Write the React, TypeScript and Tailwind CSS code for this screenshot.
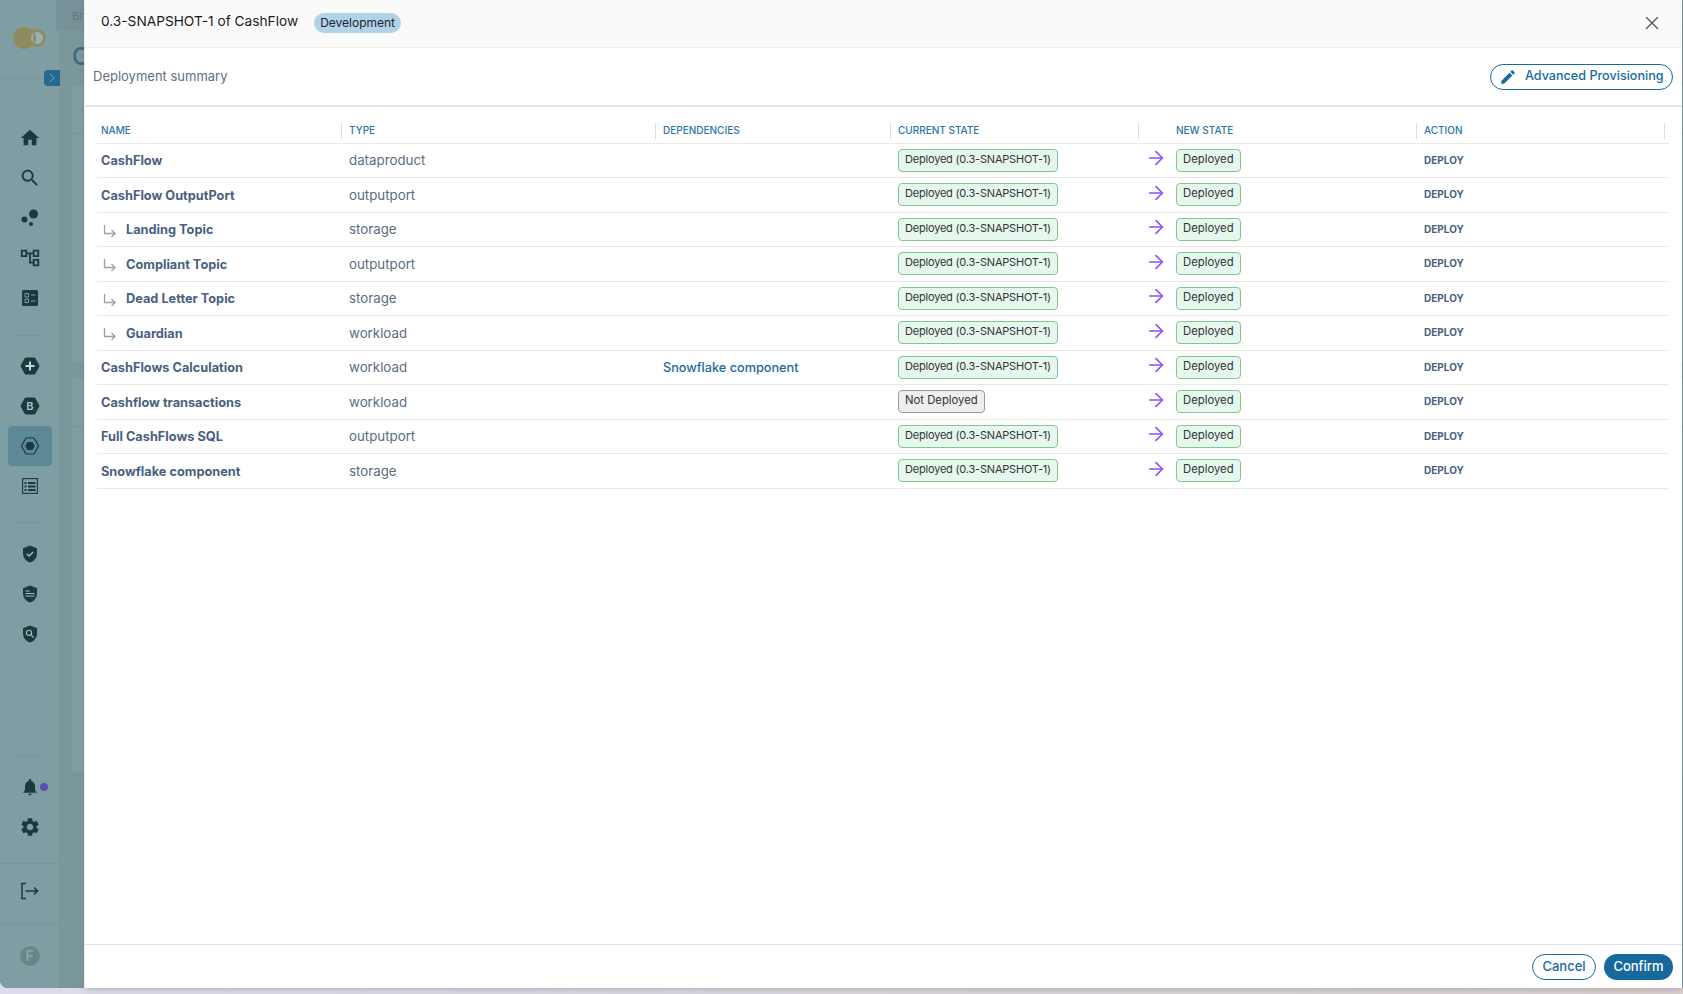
import React from 'react';
import { ArrowRight, X } from 'lucide-react';

const DARK = '#1b3a40';

const Hex = ({ children }: { children?: React.ReactNode }) => (
  <svg width="20" height="20" viewBox="0 0 20 20">
    <path d="M6 1.500h8q1 0 1.500.9l3.600 6.700q.5.9 0 1.800l-3.600 6.700q-.5.9-1.500.9H6q-1 0-1.500-.9L.9 10.900q-.5-.9 0-1.800l3.600-6.700Q5 1.500 6 1.500z" fill={DARK} />
    {children}
  </svg>
);

const Shield = ({ children }: { children?: React.ReactNode }) => (
  <svg width="18" height="18" viewBox="0 0 18 18">
    <path d="M9 .5l7 2.800v5.200c0 4.200-3 7.800-7 9-4-1.200-7-4.800-7-9V3.300z" fill={DARK} />
    {children}
  </svg>
);

const Mui = ({ d, size = 22 }: { d: string; size?: number }) => (
  <svg width={size} height={size} viewBox="0 0 24 24" fill={DARK}>
    <path d={d} />
  </svg>
);

const NavItem = ({ children, active }: { children: React.ReactNode; active?: boolean }) => (
  <div className={`ml-2 mr-[7px] flex h-10 items-center justify-center rounded ${active ? 'bg-[#5d8997]' : ''}`}>{children}</div>
);

const Sidebar = () => (
  <div className="flex h-full w-[60px] shrink-0 flex-col border-r border-[#76949a] bg-[#7f9ea3]">
    <div className="flex h-[79px] shrink-0 items-center justify-center border-b border-[#76949a] pb-[3px]">
      <svg width="34" height="24" viewBox="0 0 34 24">
        <circle cx="11" cy="12" r="11" fill="#8f8b5f" />
        <circle cx="24" cy="12" r="7.500" fill="#98b2b2" stroke="#8f8b5f" strokeWidth="3" />
        <ellipse cx="21.500" cy="12" rx="1.400" ry="5" fill="#8f8b5f" />
      </svg>
    </div>
    <div className="mt-[39px] shrink-0">
      <NavItem><Mui d="M10 20v-6h4v6h5v-8h3L12 3 2 12h3v8z" /></NavItem>
      <NavItem><Mui d="M15.500 14h-.79l-.28-.27C15.410 12.590 16 11.110 16 9.500 16 5.910 13.090 3 9.500 3S3 5.910 3 9.500 5.910 16 9.500 16c1.610 0 3.090-.59 4.230-1.570l.27.28v.79l5 4.990L20.490 19l-4.990-5zm-6 0C7.010 14 5 11.990 5 9.500S7.010 5 9.500 5 14 7.010 14 9.500 11.990 14 9.500 14z" /></NavItem>
      <NavItem>
        <svg width="20" height="20" viewBox="0 0 20 20" fill={DARK}>
          <circle cx="4.500" cy="11.500" r="3" /><circle cx="11" cy="16" r="2" /><circle cx="13.500" cy="6" r="4.500" />
        </svg>
      </NavItem>
      <NavItem><Mui d="M22 11V3h-7v3H9V3H2v8h7V8h2v10h4v3h7v-8h-7v3h-2V8h2v3h7zM7 9H4V5h3v4zm10 6h3v4h-3v-4zm0-10h3v4h-3V5z" /></NavItem>
      <NavItem>
        <svg width="16" height="16" viewBox="0 0 16 16">
          <rect width="16" height="16" rx="1.500" fill={DARK} />
          <path d="M3 3.500h3.500V7H3zM3 9h3.500v3.500H3z" fill="none" stroke="#7f9ea3" strokeWidth="1" />
          <path d="M9 5h4.500M9 11h4.500" stroke="#7f9ea3" strokeWidth="1.200" />
        </svg>
      </NavItem>
    </div>
    <div className="mx-4 mt-[17px] h-px shrink-0 bg-[#76949a]" />
    <div className="mt-[10px] shrink-0">
      <NavItem>
        <Hex><path d="M10 5.500v9M5.500 10h9" stroke="#c5d4d6" strokeWidth="2" /></Hex>
      </NavItem>
      <NavItem>
        <Hex><text x="10" y="14" textAnchor="middle" fontSize="11" fontWeight="600" fontFamily="Inter, sans-serif" fill="#a9bfc2">B</text></Hex>
      </NavItem>
      <NavItem active>
        <svg width="20" height="20" viewBox="0 0 20 20">
          <path d="M6 2h8l4.500 8-4.500 8H6L1.500 10z" fill="none" stroke={DARK} strokeWidth="1.200" strokeLinejoin="round" />
          <path d="M7.500 6h5l2.300 4-2.300 4h-5L5.200 10z" fill={DARK} />
        </svg>
      </NavItem>
      <NavItem>
        <svg width="16" height="16" viewBox="0 0 16 16" fill="none" stroke={DARK} strokeWidth="1.100">
          <rect x=".6" y=".6" width="14.800" height="14.800" />
          <path d="M2.500 4h2v2h-2zM2.500 7.500h2v2h-2zM2.500 11h2v2h-2z" fill={DARK} stroke="none" />
          <path d="M6 5h7.500M6 8.500h7.500M6 12h7.500" strokeWidth="2" />
        </svg>
      </NavItem>
    </div>
    <div className="mx-4 mt-[16px] h-px shrink-0 bg-[#76949a]" />
    <div className="mt-[11px] shrink-0">
      <NavItem>
        <Shield><path d="M5.800 8.800l2.300 2.200 4-4" fill="none" stroke="#a9bfc2" strokeWidth="1.300" /></Shield>
      </NavItem>
      <NavItem>
        <Shield><path d="M4.500 6h4M4.500 8.500h9M4.500 11h9" fill="none" stroke="#a9bfc2" strokeWidth="1" /></Shield>
      </NavItem>
      <NavItem>
        <Shield>
          <circle cx="8" cy="7.800" r="2.600" fill="none" stroke="#a9bfc2" strokeWidth="1.100" />
          <path d="M10 9.800l2.800 2.800" stroke="#a9bfc2" strokeWidth="1.200" />
        </Shield>
      </NavItem>
    </div>
    <div className="flex-1" />
    <div className="mx-4 h-px shrink-0 bg-[#76949a]" />
    <div className="mt-[11px] shrink-0">
      <div className="relative">
        <NavItem><Mui size={20} d="M12 22c1.100 0 2-.9 2-2h-4c0 1.100.9 2 2 2zm6-6v-5c0-3.070-1.630-5.640-4.500-6.320V4c0-.83-.67-1.500-1.500-1.500s-1.500.67-1.500 1.500v.68C7.640 5.360 6 7.920 6 11v5l-2 2v1h16v-1l-2-2z" /></NavItem>
        <div className="absolute left-[40px] top-[16px] h-2 w-2 rounded-full bg-[#5352b5]" />
      </div>
      <NavItem><Mui d="M19.140 12.940c.04-.3.060-.61.060-.94 0-.32-.02-.64-.07-.94l2.030-1.580c.18-.14.23-.41.120-.61l-1.920-3.320c-.12-.22-.37-.29-.59-.22l-2.390.96c-.5-.38-1.030-.7-1.620-.94l-.36-2.540c-.04-.24-.24-.41-.48-.41h-3.840c-.24 0-.43.17-.47.41l-.36 2.540c-.59.24-1.130.57-1.620.94l-2.390-.96c-.22-.08-.47 0-.59.22L2.740 8.870c-.12.21-.08.47.12.61l2.030 1.580c-.05.3-.09.63-.09.94s.02.64.07.94l-2.030 1.580c-.18.14-.23.41-.12.61l1.920 3.320c.12.22.37.29.59.22l2.390-.96c.5.38 1.030.7 1.620.94l.36 2.540c.05.24.24.41.48.41h3.840c.24 0 .44-.17.47-.41l.36-2.540c.59-.24 1.130-.56 1.620-.94l2.390.96c.22.08.47 0 .59-.22l1.920-3.320c.12-.22.07-.47-.12-.61l-2.010-1.580zM12 15.600c-1.980 0-3.600-1.620-3.600-3.600s1.620-3.600 3.600-3.600 3.600 1.620 3.600 3.600-1.620 3.600-3.600 3.600z" /></NavItem>
    </div>
    <div className="mt-4 h-px shrink-0 bg-[#76949a]" />
    <div className="flex h-[59px] shrink-0 items-center justify-center pb-[5px]">
      <svg width="20" height="18" viewBox="0 0 20 18" fill="none" stroke={DARK} strokeWidth="1.500">
        <path d="M6 1.500H2v15h4M5.500 9h12M14 5.500L17.500 9 14 12.500" />
      </svg>
    </div>
    <div className="h-px shrink-0 bg-[#76949a]" />
    <div className="flex h-[64px] shrink-0 items-center justify-center">
      <div className="flex h-5 w-5 items-center justify-center rounded-full bg-[#688589] text-[14px] font-semibold leading-none text-[#8ba5a8]">F</div>
    </div>
  </div>
);

const Backdrop = () => (
  <div className="relative flex h-[988px] w-full overflow-hidden rounded-bl-lg bg-[#7a979c]">
    <Sidebar />
    <div className="flex-1 pl-3">
      <div className="h-[30px] -ml-[16px] bg-[#769298] pl-4 pt-2 text-[11px] text-[#5c7a80]">Br</div>
      <div className="pt-[13px] text-[24px] font-medium leading-7 text-[#3f6a7e]">C</div>
      <div className="mt-[15px] h-[276px] rounded-l bg-[#7f9ea3]"><div className="h-[48px] border-b border-[#76949a]" /></div>
      <div className="mt-4 h-[394px] rounded-l bg-[#7f9ea3]"><div className="h-[49px] border-b border-[#76949a]" /></div>
    </div>
    {/* collapse toggle of the nav, sits on its edge */}
    <div className="absolute left-[44px] top-[70px] flex h-4 w-4 items-center justify-center rounded-l-sm bg-[#27698a]">
      <svg width="8" height="10" viewBox="0 0 8 10" fill="none" stroke="#7fa9bd" strokeWidth="1"><path d="M2 1l4 4-4 4" /></svg>
    </div>
  </div>
);

type Row = { name: string; type: string; child?: boolean; dep?: string; notDeployed?: boolean };

const rows: Row[] = [
  { name: 'CashFlow', type: 'dataproduct' },
  { name: 'CashFlow OutputPort', type: 'outputport' },
  { name: 'Landing Topic', type: 'storage', child: true },
  { name: 'Compliant Topic', type: 'outputport', child: true },
  { name: 'Dead Letter Topic', type: 'storage', child: true },
  { name: 'Guardian', type: 'workload', child: true },
  { name: 'CashFlows Calculation', type: 'workload', dep: 'Snowflake component' },
  { name: 'Cashflow transactions', type: 'workload', notDeployed: true },
  { name: 'Full CashFlows SQL', type: 'outputport' },
  { name: 'Snowflake component', type: 'storage' },
];

const Badge = ({ label, grey, tight }: { label: string; grey?: boolean; tight?: boolean }) => (
  <span className={`flex h-[23px] w-fit items-center rounded border px-[6px] pb-[2px] leading-none whitespace-nowrap text-[#333] ${tight ? 'text-[11px] tracking-[-0.2px]' : 'text-[11.300px]'} ${grey ? 'border-[#9a9a9a] bg-[#eeeeee]' : 'border-[#7fc98f] bg-[#e6f8ee]'}`}>
    {label}
  </span>
);

const Th = ({ label, first, last, noLine }: { label?: string; first?: boolean; last?: boolean; noLine?: boolean }) => (
  <th className="p-0 pb-[4px] text-left align-bottom">
    <div className={`flex h-4 items-center text-[10px] font-medium text-[#2a76a8] ${first ? 'pl-1' : 'pl-[7px]'} ${last ? 'mr-1' : ''} ${noLine ? '' : 'border-r border-[#dddddd]'}`}>
      {label}
    </div>
  </th>
);

const Modal = () => (
  <div className="absolute inset-y-0 left-[84px] right-[1px] bottom-[6px] flex flex-col border-l border-[#eeeeee] bg-white shadow-md">
    <div className="flex h-[48px] shrink-0 items-center border-b border-[#eeeeee] bg-[#fafafa] pl-4 pr-[19px]">
      <span className="-mt-[3px] text-[13.700px] leading-none text-[#1c1c1c]">0.3-SNAPSHOT-1 of CashFlow</span>
      <span className="ml-4 -mt-[2px] flex h-5 items-center rounded-full bg-[#b1d3e7] px-[6px] text-[12px] text-[#223]">Development</span>
      <X className="ml-auto -mt-[2px] text-[#555]" size={22} strokeWidth={1.400} />
    </div>
    <div className="flex h-[59px] shrink-0 items-center justify-between border-b-2 border-[#e5e5e5] pl-2 pr-[9px]">
      <span className="text-[13px] text-[#5f6f80]">Deployment summary</span>
      <button className="flex h-[26px] w-[183px] items-center whitespace-nowrap rounded-full border border-[#196a9e] pl-[8px] text-[12.600px] font-medium text-[#196a9e]">
        <svg width="18" height="18" viewBox="0 0 24 24" fill="#196a9e"><path d="M3 17.250V21h3.750L17.810 9.940l-3.750-3.750L3 17.250zM20.710 7.040c.39-.39.390-1.020 0-1.410l-2.340-2.340c-.39-.39-1.020-.39-1.410 0l-1.830 1.830 3.750 3.750 1.830-1.830z" /></svg>
        <span className="ml-[8px]">Advanced Provisioning</span>
      </button>
    </div>
    <div className="flex-1 pl-3 pr-[13px]">
      <table className="w-full table-fixed">
        <colgroup>
          <col className="w-[245px]" />
          <col className="w-[314px]" />
          <col className="w-[235px]" />
          <col className="w-[248px]" />
          <col className="w-[30px]" />
          <col className="w-[248px]" />
          <col />
        </colgroup>
        <thead>
          <tr className="h-[36px] border-b border-[#e8e8e8]">
            <Th label="NAME" first />
            <Th label="TYPE" />
            <Th label="DEPENDENCIES" />
            <Th label="CURRENT STATE" />
            <Th noLine />
            <Th label="NEW STATE" />
            <Th label="ACTION" last />
          </tr>
        </thead>
        <tbody>
          {rows.map((r) => (
            <tr key={r.name} className="h-[34.500px] border-b border-[#e8e8e8]">
              <td className="p-0 pl-1 pt-px text-[12.750px] font-bold text-[#4a5f7f]">
                {r.child ? (
                  <span className="flex items-center">
                    <svg width="14" height="14" viewBox="0 0 14 14" fill="none" stroke="#a0a0a0" strokeWidth="1.300" className="ml-[2px] mr-[9px] mt-[2px]">
                      <path d="M1.500 1v8.500h10M8.500 6l3.500 3.500L8.500 13" />
                    </svg>
                    {r.name}
                  </span>
                ) : r.name}
              </td>
              <td className="p-0 pl-[7px] pt-[2px] text-[13.300px] text-[#5b6c82]">{r.type}</td>
              <td className="p-0 pl-[7px] pt-px text-[12.700px] font-medium text-[#196a9e]">{r.dep}</td>
              <td className="p-0 pl-[7px]">
                {r.notDeployed ? <Badge label="Not Deployed" grey /> : <Badge label="Deployed (0.3-SNAPSHOT-1)" tight />}
              </td>
              <td className="p-0 pl-[6px]"><ArrowRight size={22} strokeWidth={1.700} className="-mt-1 block text-[#8a4fff]" /></td>
              <td className="p-0 pl-[7px]"><Badge label="Deployed" /></td>
              <td className="p-0 pl-[7px] text-[10px] font-bold text-[#4a5f7f]">DEPLOY</td>
            </tr>
          ))}
        </tbody>
      </table>
    </div>
    <div className="flex h-[44px] shrink-0 items-center justify-end gap-2 border-t border-[#e2e2e2] pr-[9px]">
      <button className="h-[26px] w-[64px] rounded-full border border-[#196a9e] text-[13px] font-medium text-[#196a9e]">Cancel</button>
      <button className="h-[26px] w-[69px] rounded-full bg-[#17689c] text-[13px] font-medium text-white">Confirm</button>
    </div>
  </div>
);

export default function App() {
  return (
    <div className="relative h-[994px] w-[1683px] overflow-hidden bg-linear-to-r from-[#dcdcec] to-[#d8cfcf] font-['Inter',sans-serif]">
      <Backdrop />
      <Modal />
    </div>
  );
}
